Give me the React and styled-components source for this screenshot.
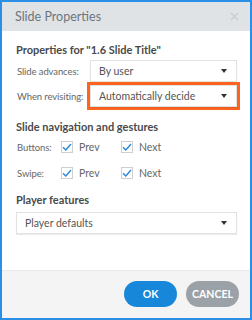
import React from 'react';
import styled, { createGlobalStyle } from 'styled-components';

const Global = createGlobalStyle`
  html, body {
    margin: 0;
    padding: 0;
    background: #fff;
  }
  * {
    box-sizing: border-box;
  }
`;

const Dialog = styled.div`
  width: 252px;
  height: 320px;
  border: 2px solid #2b8fe6;
  display: flex;
  flex-direction: column;
  font-family: Lato, 'Open Sans', sans-serif;
  background: #fff;
`;

const Header = styled.div`
  height: 29px;
  flex: none;
  background: #dfe3e6;
  display: flex;
  align-items: center;
  justify-content: space-between;
  padding: 0 11px 0 13px;
  color: #6d757d;
  font-size: 12.5px;
`;

const Close = styled.svg`
  width: 9px;
  height: 9px;
`;

const Body = styled.div`
  flex: 1;
  padding: 11px 13px 0 14px;
  display: flex;
  flex-direction: column;
`;

const Heading = styled.div`
  font-size: 11px;
  font-weight: 700;
  color: #4a4a4a;
  line-height: 15px;
  white-space: nowrap;
  margin-top: ${({ top }) => top || 0}px;
`;

const FieldRow = styled.div`
  display: flex;
  align-items: center;
  margin-top: ${({ top }) => top || 0}px;
`;

const Label = styled.div`
  width: ${({ w }) => w || 74}px;
  flex: none;
  padding-left: 1px;
  font-size: 9.5px;
  letter-spacing: -0.1px;
  color: #666;
  white-space: nowrap;
`;

const Highlight = styled.div`
  flex: 1;
  border: 3px solid #fe6420;
  margin: 0 -3px;
`;

const Select = styled.div`
  flex: 1;
  height: 22px;
  border: 1px solid #e2e2e2;
  box-shadow: 0 1px 1px rgba(0, 0, 0, 0.08);
  background: #fff;
  display: flex;
  align-items: center;
  justify-content: space-between;
  padding: 0 9px 0 8px;
  font-size: 10.5px;
  color: #555;
  white-space: nowrap;
`;

const Arrow = styled.span`
  width: 0;
  height: 0;
  border-left: 3px solid transparent;
  border-right: 3px solid transparent;
  border-top: 4px solid #333;
`;

const CheckRow = styled.div`
  display: flex;
  align-items: center;
  margin-top: ${({ top }) => top || 0}px;
`;

const Check = styled.label`
  display: flex;
  align-items: center;
  gap: 6px;
  width: 60px;
  font-size: 10.5px;
  color: #666;
`;

const Box = styled.span`
  width: 12px;
  height: 12px;
  border: 1px solid #d0d0d0;
  background: #fff;
  display: flex;
  align-items: center;
  justify-content: center;
`;

const Footer = styled.div`
  height: 48px;
  flex: none;
  background: #f4f4f4;
  border-top: 1px solid #e8e8e8;
  display: flex;
  align-items: center;
  justify-content: flex-end;
  gap: 9px;
  padding: 0 11px 1px 0;
`;

const Button = styled.button`
  width: 53px;
  height: 26px;
  border: none;
  border-radius: 13px;
  background: ${({ primary }) => (primary ? '#1787d9' : '#9aa2a8')};
  color: #fff;
  font-family: inherit;
  font-size: 10.5px;
  font-weight: 700;
  padding: 0;
`;

function Tick() {
  return (
    <svg width="10" height="8" viewBox="0 0 10 8">
      <path d="M1 4.2 L3.8 7 L9 1" fill="none" stroke="#2a88da" strokeWidth="1.4" />
    </svg>
  );
}

function CheckItem({ children }) {
  return (
    <Check>
      <Box>
        <Tick />
      </Box>
      {children}
    </Check>
  );
}

export default function App() {
  return (
    <>
      <Global />
      <Dialog>
        <Header>
          <span>Slide Properties</span>
          <Close viewBox="0 0 9 9">
            <path d="M1 1 L8 8 M8 1 L1 8" stroke="#c5cacf" strokeWidth="1.2" />
          </Close>
        </Header>
        <Body>
          <Heading>Properties for "1.6 Slide Title"</Heading>
          <FieldRow top={3}>
            <Label>Slide advances:</Label>
            <Select>
              By user
              <Arrow />
            </Select>
          </FieldRow>
          <FieldRow>
            <Label>When revisiting:</Label>
            <Highlight>
              <Select>
                Automatically decide
                <Arrow />
              </Select>
            </Highlight>
          </FieldRow>
          <Heading top={9}>Slide navigation and gestures</Heading>
          <CheckRow top={7}>
            <Label w={45}>Buttons:</Label>
            <CheckItem>Prev</CheckItem>
            <CheckItem>Next</CheckItem>
          </CheckRow>
          <CheckRow top={14}>
            <Label w={45}>Swipe:</Label>
            <CheckItem>Prev</CheckItem>
            <CheckItem>Next</CheckItem>
          </CheckRow>
          <Heading top={13}>Player features</Heading>
          <FieldRow top={5}>
            <Select>
              Player defaults
              <Arrow />
            </Select>
          </FieldRow>
        </Body>
        <Footer>
          <Button primary>OK</Button>
          <Button>CANCEL</Button>
        </Footer>
      </Dialog>
    </>
  );
}
